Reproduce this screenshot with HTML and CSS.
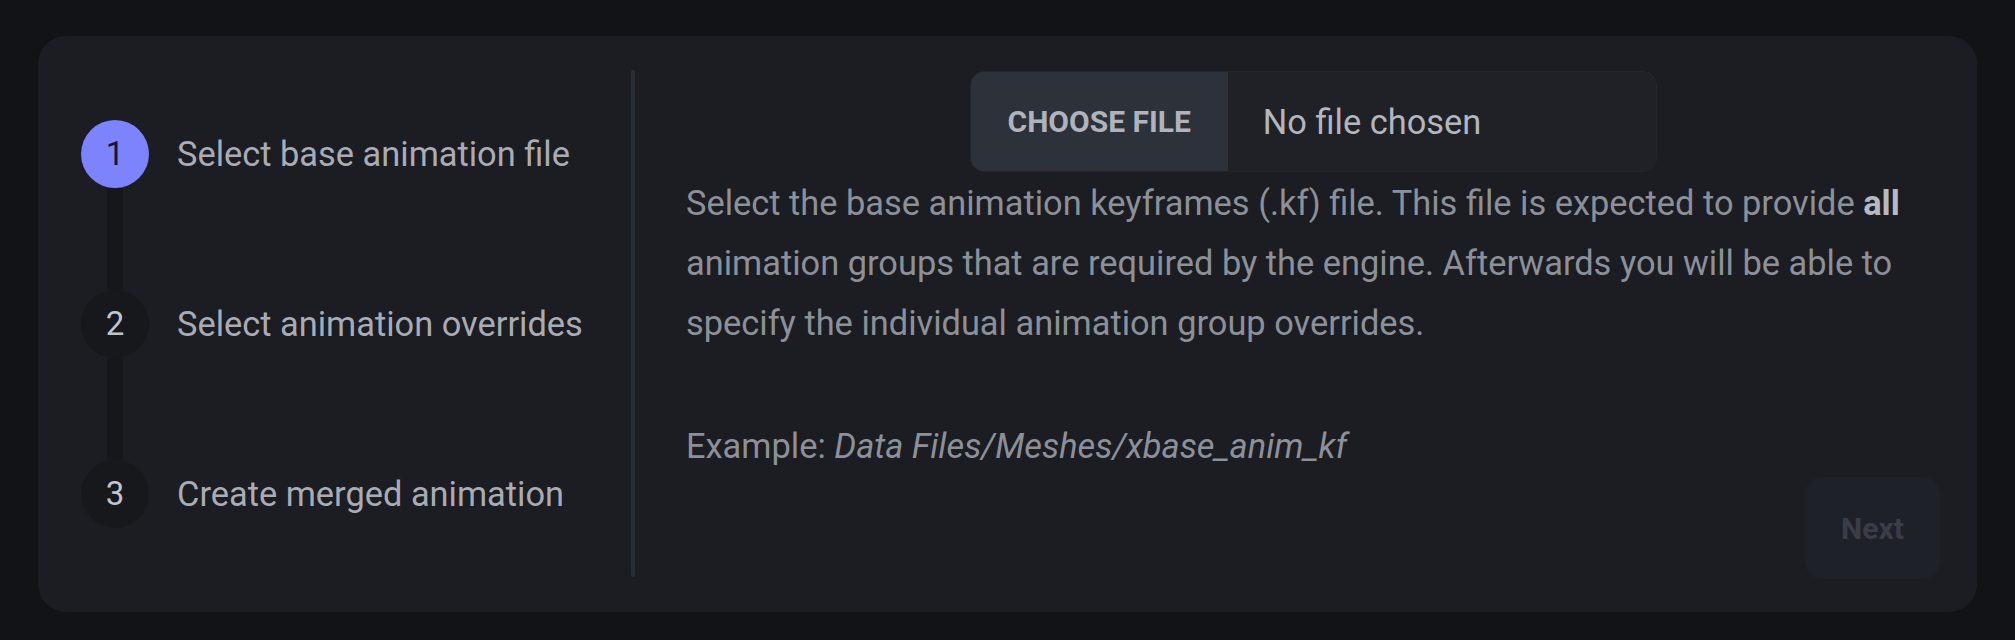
FILE: index.html
```html
<!DOCTYPE html>
<html lang="en">
<head>
<meta charset="utf-8">
<title>Animation merger</title>
<link rel="stylesheet" href="styles.css">
</head>
<body>
<main class="card">
  <nav class="stepper">
    <div class="step step-active">
      <span class="step-icon">1</span>
      <span class="step-label">Select base animation file</span>
    </div>
    <div class="connector"></div>
    <div class="step">
      <span class="step-icon">2</span>
      <span class="step-label">Select animation overrides</span>
    </div>
    <div class="connector"></div>
    <div class="step">
      <span class="step-icon">3</span>
      <span class="step-label">Create merged animation</span>
    </div>
  </nav>
  <div class="divider"></div>
  <section class="panel">
    <div class="file-input">
      <span class="file-button">CHOOSE FILE</span>
      <span class="file-name">No file chosen</span>
    </div>
    <p class="desc">Select the base animation keyframes (.kf) file. This file is expected to provide <strong>all</strong><br>animation groups that are required by the engine. Afterwards you will be able to<br>specify the individual animation group overrides.</p>
    <p class="desc example">Example: <em>Data Files/Meshes/xbase_anim_kf</em></p>
    <div class="actions">
      <button class="next-btn" disabled>Next</button>
    </div>
  </section>
</main>
</body>
</html>
```

FILE: styles.css
```css
* {
  box-sizing: border-box;
}

html, body {
  margin: 0;
  height: 100%;
}

body {
  background: #121317;
  font-family: Roboto, "Noto Sans", "Liberation Sans", sans-serif;
  padding: 36px 38px 28px 38px;
}

.card {
  display: flex;
  height: 576px;
  background: #1b1d22;
  border-radius: 28px;
  padding: 34px 37px 35px 43px;
}

.stepper {
  width: 550px;
  flex: none;
  display: flex;
  flex-direction: column;
  justify-content: center;
}

.step {
  display: flex;
  align-items: center;
  gap: 28px;
  height: 68px;
}

.step-icon {
  width: 68px;
  height: 68px;
  flex: none;
  border-radius: 50%;
  background: #17181c;
  color: #c1c4cc;
  font-size: 33px;
  display: flex;
  align-items: center;
  justify-content: center;
}

.step-active .step-icon {
  background: #7c83fd;
  color: #14163f;
}

.step-label {
  font-size: 34.4px;
  color: #a9acb5;
  white-space: nowrap;
}

.connector {
  width: 16px;
  height: 102px;
  margin-left: 26px;
  background: #16171b;
}

.divider {
  width: 4px;
  flex: none;
  background: #2a2d33;
  border-radius: 2px;
}

.panel {
  flex: 1;
  display: flex;
  flex-direction: column;
  padding-left: 51px;
}

.file-input {
  align-self: center;
  width: 687px;
  height: 101px;
  margin-top: 1px;
  display: flex;
  align-items: center;
  background: #1f2127;
  border: 1px solid #22252b;
  border-radius: 14px;
  overflow: hidden;
}

.file-button {
  height: 100%;
  display: flex;
  align-items: center;
  padding: 0 37px;
  background: #2c313a;
  color: #b0b3bb;
  font-weight: 700;
  font-size: 30px;
}

.file-name {
  padding-left: 35px;
  color: #b3b6be;
  font-size: 34.4px;
}

.desc {
  margin: 1px 0 0 0;
  font-size: 34.4px;
  line-height: 60px;
  color: #8c9099;
  white-space: nowrap;
}

.desc strong {
  color: #b6b9c1;
  font-weight: 700;
}

.example {
  margin-top: 63px;
}

.actions {
  margin-top: auto;
  display: flex;
  justify-content: flex-end;
}

.next-btn {
  width: 135px;
  height: 102px;
  margin-bottom: -2px;
  border: none;
  border-radius: 18px;
  background: #1f2128;
  color: #3a3d45;
  font-family: inherit;
  font-weight: 700;
  font-size: 30px;
}
```
